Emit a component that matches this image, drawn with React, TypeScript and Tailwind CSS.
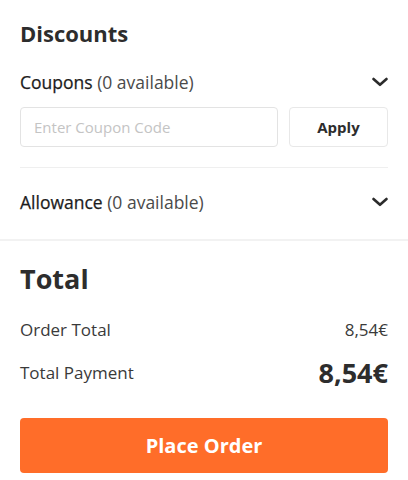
import React from "react";

function Chevron() {
    return (
        <svg className="w-4 h-[10px] text-[#2b2b2b]" viewBox="0 0 16 10" fill="none" stroke="currentColor">
            <path d="M1.5 2L8 7.8L14.5 2" strokeWidth="2.6" strokeLinecap="round" strokeLinejoin="round"/>
        </svg>
    );
}

function Toggle({label}: {label: string}) {
    return (
        <button className="w-full flex items-center justify-between h-6 text-[17.5px] leading-6">
            <span className="text-[#4a4a4a]">
                <span className="text-[#1c1c1c] [-webkit-text-stroke:0.25px_#1c1c1c]">{label}</span> (0 available)
            </span>
            <Chevron/>
        </button>
    );
}

export default function App() {
    const [code, setCode] = React.useState("");

    return (
        <div className="w-[408px] h-[480px] bg-white text-[#333]" style={{fontFamily: '"Open Sans", "Noto Sans", sans-serif'}}>
            <section className="px-5 pt-[18px]">
                <h2 className="text-[22px] leading-[30px] font-bold text-[#2d2d2d]">Discounts</h2>

                <div className="mt-[22px]">
                    <Toggle label="Coupons"/>
                </div>

                <div className="mt-[13px] flex gap-[11px] h-10">
                    <input
                        value={code}
                        onChange={e => setCode(e.target.value)}
                        placeholder="Enter Coupon Code"
                        className="flex-1 min-w-0 rounded border border-[#e3e3e3] px-[13px] text-[15px] text-[#333] placeholder:text-[#c4c4c4] outline-none"
                    />
                    <button className="w-[99px] rounded border border-[#e8e8e8] text-[15px] font-bold text-[#2d2d2d]">
                        Apply
                    </button>
                </div>

                <div className="mt-5 h-px bg-[#efefef]"/>

                <div className="mt-[22px]">
                    <Toggle label="Allowance"/>
                </div>
            </section>

            <div className="mt-[25px] h-[2px] bg-[#f2f2f2]"/>

            <section className="px-5 pt-5">
                <h2 className="text-[27px] leading-9 font-bold text-[#2d2d2d]">Total</h2>

                <div className="mt-[21px] flex items-center justify-between h-6 text-[17px] leading-6 text-[#3a3a3a]">
                    <span>Order Total</span>
                    <span>8,54€</span>
                </div>

                <div className="mt-[13px] flex items-center justify-between h-9">
                    <span className="text-[17px] leading-6 text-[#3a3a3a]">Total Payment</span>
                    <span className="text-[27px] leading-9 font-bold text-[#2d2d2d]">8,54€</span>
                </div>

                <button className="mt-[27px] w-full h-[55px] rounded bg-[#ff6d29] text-white text-[20px] font-bold">
                    Place Order
                </button>
            </section>
        </div>
    );
}
